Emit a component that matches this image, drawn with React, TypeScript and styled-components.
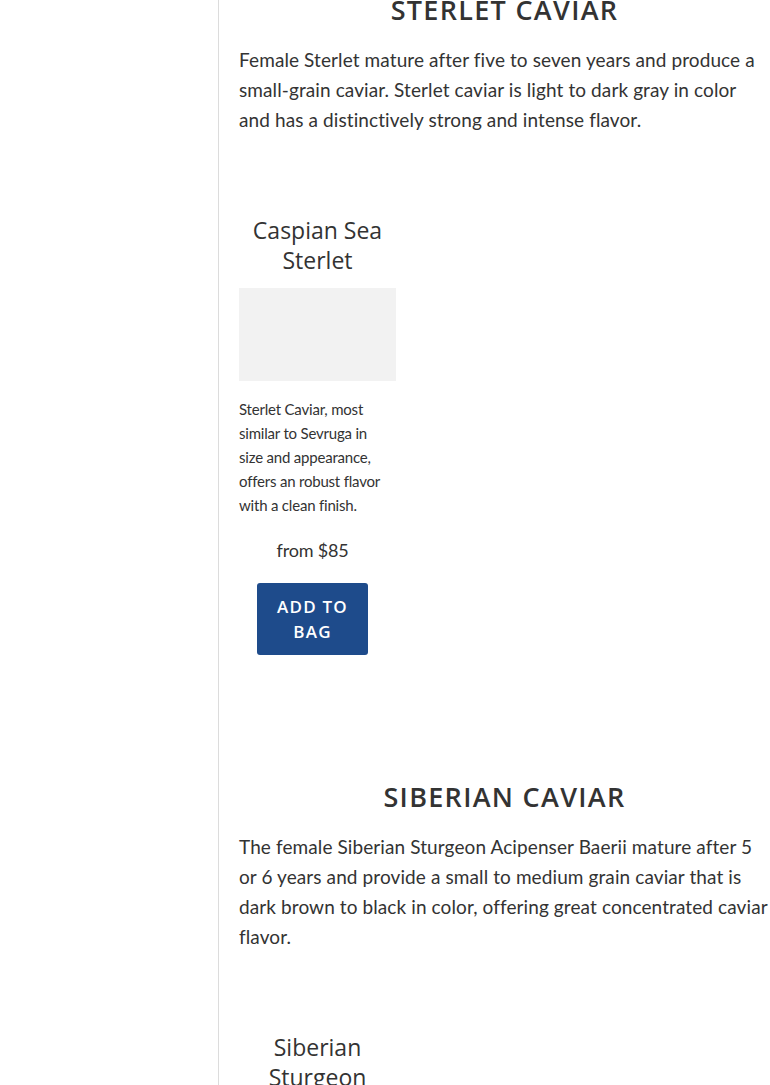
import styled, { createGlobalStyle } from 'styled-components'

const GlobalStyle = createGlobalStyle`
  body {
    margin: 0;
    background: #fff;
    overflow: hidden;
  }
`

interface IProduct {
  name: string
  description: string
  price: string
}

interface ISection {
  title: string
  intro: string
  products: IProduct[]
}

const sections: ISection[] = [
  {
    title: 'Sterlet Caviar',
    intro:
      'Female Sterlet mature after five to seven years and produce a small-grain caviar. Sterlet caviar is light to dark gray in color and has a distinctively strong and intense flavor.',
    products: [
      {
        name: 'Caspian Sea Sterlet',
        description:
          'Sterlet Caviar, most similar to Sevruga in size and appearance, offers an robust flavor with a clean finish.',
        price: '85',
      },
    ],
  },
  {
    title: 'Siberian Caviar',
    intro:
      'The female Siberian Sturgeon Acipenser Baerii mature after 5 or 6 years and provide a small to medium grain caviar that is dark brown to black in color, offering great concentrated caviar flavor.',
    products: [
      {
        name: 'Siberian Sturgeon',
        description: '',
        price: '',
      },
    ],
  },
]

const ProductCard = ({ product }: { product: IProduct }) => (
  <Card>
    <CardTitle>{product.name}</CardTitle>
    <Image />
    <Description>{product.description}</Description>
    <Price>from ${product.price}</Price>
    <Button>Add to bag</Button>
  </Card>
)

const App = () => {
  return (
    <Page>
      <GlobalStyle />
      <Sidebar />
      <Main>
        {sections.map((section) => (
          <Section key={section.title}>
            <Heading>{section.title}</Heading>
            <Intro>{section.intro}</Intro>
            <Grid>
              {section.products.map((p) => (
                <ProductCard key={p.name} product={p} />
              ))}
            </Grid>
          </Section>
        ))}
      </Main>
    </Page>
  )
}

export default App

const Page = styled.div`
  display: flex;
  height: 1085px;
  overflow: hidden;
`

const Sidebar = styled.aside`
  width: 218px;
  flex-shrink: 0;
  border-right: 1px solid #dcdcdc;
`

const Main = styled.main`
  flex: 1;
  min-width: 0;
  padding-left: 20px;
  margin-top: -10px;
  display: flex;
  flex-direction: column;
`

const Section = styled.section`
  display: flex;
  flex-direction: column;
  padding-bottom: 122px;
`

const Heading = styled.h2`
  font-family: 'Open Sans', sans-serif;
  font-weight: 600;
  font-size: 27px;
  line-height: 40px;
  letter-spacing: 1.3px;
  text-transform: uppercase;
  text-align: center;
  color: #333;
  margin: 0 0 15px 0;
`

const Intro = styled.p`
  font-family: Lato, sans-serif;
  font-size: 19px;
  line-height: 30px;
  letter-spacing: 0.1px;
  color: #333;
  margin: 0 0 80px 0;
`

const Grid = styled.div`
  display: flex;
  gap: 20px;
`

const Card = styled.div`
  width: 157px;
  display: flex;
  flex-direction: column;
`

const CardTitle = styled.h3`
  font-family: 'Open Sans', sans-serif;
  font-weight: 400;
  font-size: 23px;
  line-height: 30px;
  text-align: center;
  color: #333;
  margin: 0 0 13px 0;
`

const Image = styled.div`
  height: 93px;
  background: #f2f2f2;
  margin-bottom: 16px;
`

const Description = styled.p`
  font-family: Lato, sans-serif;
  font-size: 15px;
  line-height: 24px;
  letter-spacing: -0.2px;
  color: #333;
  margin: 0 8px 20px 0;
`

const Price = styled.p`
  font-family: Lato, sans-serif;
  font-size: 18px;
  line-height: 27px;
  letter-spacing: -0.2px;
  text-align: center;
  color: #333;
  margin: 0 10px 0 0;
`

const Button = styled.button`
  align-self: center;
  margin: 19px 10px 0 0;
  width: 111px;
  padding: 11px 16px;
  border: none;
  border-radius: 3px;
  background: #1e4b8b;
  color: #fff;
  font-family: 'Open Sans', sans-serif;
  font-weight: 600;
  font-size: 17px;
  line-height: 25px;
  letter-spacing: 1.2px;
  text-transform: uppercase;
  cursor: pointer;
`
